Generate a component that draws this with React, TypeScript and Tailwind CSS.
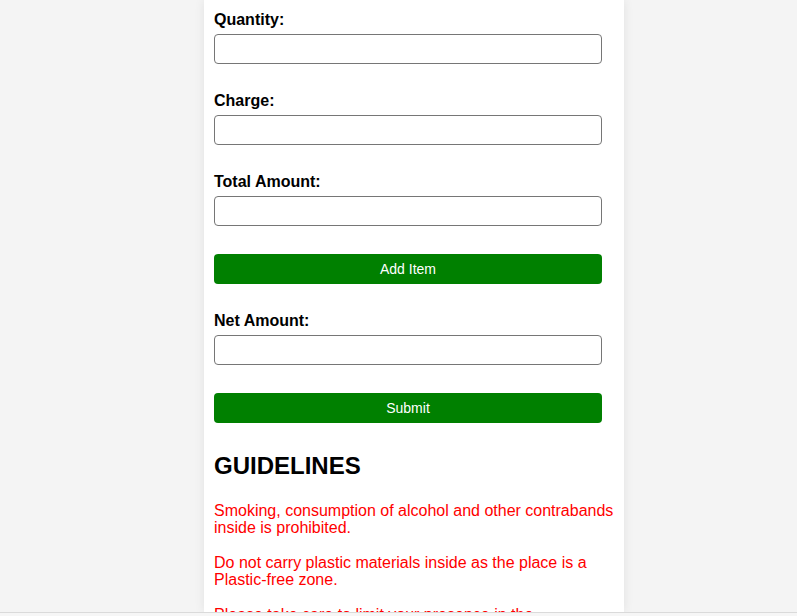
export default function App() {
    const fields = ["Quantity:", "Charge:", "Total Amount:"];
    return (
        <div className="h-[616px] flex flex-col bg-[#f4f4f4] font-['Liberation_Sans',Arial,sans-serif] overflow-hidden">
            <main className="flex-1 overflow-hidden flex">
                <div className="w-[420px] ml-[204px] bg-white shadow-[0_0_10px_rgba(0,0,0,0.08)] px-[10px] pt-[11px]">
                    {fields.map((f) => (
                        <div key={f} className="mb-[28px]">
                            <label className="block text-[16px] leading-[18px] font-bold text-black">{f}</label>
                            <input type="text" className="mt-[5px] block w-[388px] h-[30px] border border-[#767676] rounded-[4px] bg-white" />
                        </div>
                    ))}
                    <button className="block w-[388px] h-[30px] rounded-[4px] bg-[#008000] text-white text-[14px]">Add Item</button>
                    <div className="mt-[28px]">
                        <label className="block text-[16px] leading-[18px] font-bold text-black">Net Amount:</label>
                        <input type="text" className="mt-[5px] block w-[388px] h-[30px] border border-[#767676] rounded-[4px] bg-white" />
                    </div>
                    <button className="block w-[388px] h-[30px] mt-[28px] rounded-[4px] bg-[#008000] text-white text-[14px]">Submit</button>
                    <h2 className="mt-[29px] text-[24px] leading-[28px] font-bold text-black">GUIDELINES</h2>
                    <div className="mt-[22px] text-[16px] leading-[17px] text-[#ff0000] space-y-[18px]">
                        <p>Smoking, consumption of alcohol and other contrabands inside is prohibited.</p>
                        <p>Do not carry plastic materials inside as the place is a Plastic-free zone.</p>
                        <p>Please take care to limit your presence in the washrooms and common areas.</p>
                    </div>
                </div>
            </main>
            <div className="h-[4px] border-t border-[#dadada] bg-[#f6f6f6]"></div>
        </div>
    );
}
